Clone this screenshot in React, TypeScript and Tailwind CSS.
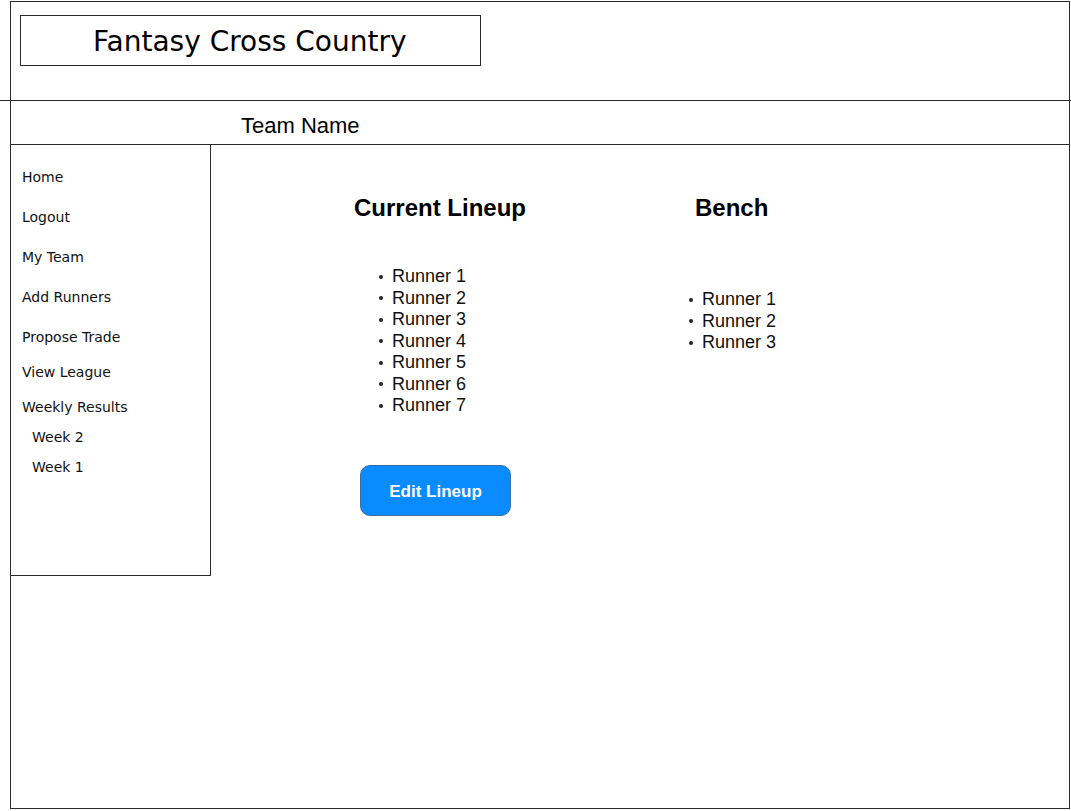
const navItems = [
  { label: "Home", top: "mt-[22px]", indent: false },
  { label: "Logout", top: "mt-[20px]", indent: false },
  { label: "My Team", top: "mt-[20px]", indent: false },
  { label: "Add Runners", top: "mt-[20px]", indent: false },
  { label: "Propose Trade", top: "mt-[20px]", indent: false },
  { label: "View League", top: "mt-[15px]", indent: false },
  { label: "Weekly Results", top: "mt-[15px]", indent: false },
  { label: "Week 2", top: "mt-[10px]", indent: true },
  { label: "Week 1", top: "mt-[10px]", indent: true },
];

const lineup = ["Runner 1", "Runner 2", "Runner 3", "Runner 4", "Runner 5", "Runner 6", "Runner 7"];
const bench = ["Runner 1", "Runner 2", "Runner 3"];

function RunnerList({ runners }: { runners: string[] }) {
  return (
    <ul className="font-['Liberation_Sans',Arial,sans-serif] text-[18px] leading-[21.5px] text-[#111]">
      {runners.map((r, i) => (
        <li key={i} className="flex items-center">
          <span className="ml-[25px] mr-[9px] h-[4px] w-[4px] rounded-full bg-[#222]" />
          <span>{r}</span>
        </li>
      ))}
    </ul>
  );
}

export default function App() {
  return (
    <div className="h-[811px] w-[1071px] overflow-hidden bg-white pt-[1px] pl-[10px]">
      <div className="h-[808px] w-[1060px] border border-[#2a2a2a]">
        {/* header */}
        <div className="h-[98px] pt-[13px] pl-[9px]">
          <div className="flex h-[51px] w-[461px] items-center border border-[#2a2a2a] pt-[2px] pl-[72px] font-['DejaVu_Sans',Verdana,sans-serif] text-[28px] text-black">
            Fantasy Cross Country
          </div>
        </div>
        <div className="-ml-[11px] h-[1px] w-[1071px] bg-[#2a2a2a]" />
        <div className="flex h-[44px] items-center border-b border-[#2a2a2a] pt-[5px] pl-[230px] font-['Liberation_Sans',Arial,sans-serif] text-[22px] text-black">
          Team Name
        </div>

        <div className="flex">
          {/* sidebar */}
          <nav className="flex h-[431px] w-[200px] flex-col border-r border-b border-[#2a2a2a] pl-[11px] font-['DejaVu_Sans',Verdana,sans-serif] text-[14px] leading-[20px] text-[#111]">
            {navItems.map((n) => (
              <div key={n.label} className={`${n.top} ${n.indent ? "pl-[10px]" : ""}`}>
                {n.label}
              </div>
            ))}
          </nav>

          {/* main */}
          <div className="flex">
            <div className="ml-[143px] w-[172px]">
              <h2 className="mt-[49px] h-[28px] font-['Liberation_Sans',Arial,sans-serif] text-[24px] font-bold leading-[28px] text-black">
                Current Lineup
              </h2>
              <div className="mt-[44px]">
                <RunnerList runners={lineup} />
              </div>
              <button className="mt-[48px] ml-[6px] flex h-[51px] w-[151px] items-center justify-center rounded-[10px] border border-[#3f6ea3] bg-[#0a8bff] pt-[3px] font-['Liberation_Sans',Arial,sans-serif] text-[17px] font-bold text-white">
                Edit Lineup
              </button>
            </div>
            <div className="ml-[169px]">
              <h2 className="mt-[49px] h-[28px] font-['Liberation_Sans',Arial,sans-serif] text-[24px] font-bold leading-[28px] text-black">
                Bench
              </h2>
              <div className="-ml-[31px] mt-[67px]">
                <RunnerList runners={bench} />
              </div>
            </div>
          </div>
        </div>
      </div>
    </div>
  );
}
